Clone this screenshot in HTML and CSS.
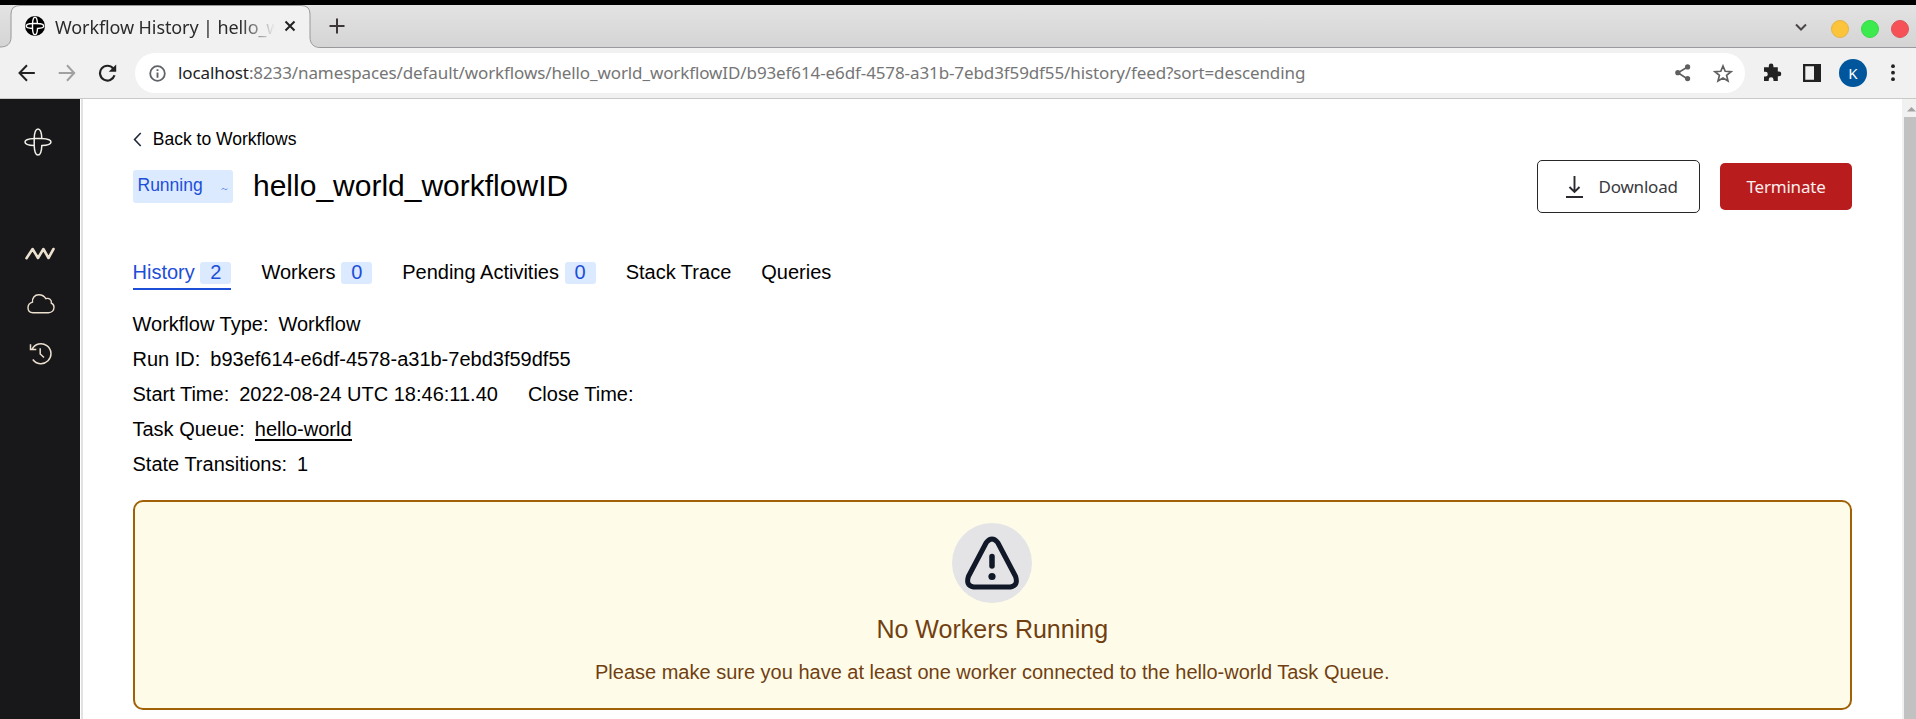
FILE: index.html
```html
<!DOCTYPE html>
<html lang="en">
<head>
<meta charset="utf-8">
<title>Workflow History | hello_world_workflowID</title>
<link rel="stylesheet" href="styles.css">
</head>
<body>
<div class="window">
  <div class="tabstrip">
    <svg class="tab-shape" width="334" height="43" viewBox="0 0 334 43">
      <path d="M0 43V42C7 42 11 39 11 32V9Q11 .5 20 .5H301Q310 .5 310 9V32C310 39 314 42 320 42V43Z" fill="#f1f1f1"/>
      <path d="M0 42C7 42 11 39 11 32V9Q11 .5 20 .5H301Q310 .5 310 9V32C310 39 314 42.5 320 42.5H334" fill="none" stroke="#989898"/>
    </svg>
    <div class="tab">
      <svg class="favicon" width="20" height="20" viewBox="0 0 20 20"><circle cx="10" cy="10" r="10" fill="#000"/><g fill="none" stroke="#fff" stroke-width="1.4"><path d="M7.500 7.500C7.700 4 8.600 1.200 10 1.200S12.300 4 12.500 7.500C16 7.700 18.800 8.600 18.800 10S16 12.300 12.500 12.500C12.300 16 11.400 18.800 10 18.800S7.700 16 7.500 12.500C4 12.300 1.200 11.400 1.200 10S4 7.700 7.500 7.500Z"/><path d="M7.500 12.500V7.500H12.500"/></g></svg>
      <span class="tab-title">Workflow History | hello_w</span>
      <svg class="tab-close" width="12" height="12" viewBox="0 0 12 12"><path d="M1.5 1.5L10.5 10.5M10.5 1.5L1.5 10.5" stroke="#222" stroke-width="2"/></svg>
    </div>
    <svg class="new-tab" width="16" height="16" viewBox="0 0 16 16"><path d="M8 .5V15.5M.5 8H15.5" stroke="#3c3639" stroke-width="2"/></svg>
    <div class="controls">
      <svg class="tab-search" width="12" height="9" viewBox="0 0 12 9"><path d="M1 1.5L6 6.5L11 1.5" fill="none" stroke="#4a4648" stroke-width="2"/></svg>
      <span class="dot yellow"></span><span class="dot green"></span><span class="dot red"></span>
    </div>
  </div>
  <div class="toolbar">
    <div class="nav">
      <svg width="18" height="18" viewBox="0 0 18 18"><path d="M16.800 9H2M9 1.3L1.5 9L9 16.7" fill="none" stroke="#222" stroke-width="2"/></svg>
      <svg width="18" height="18" viewBox="0 0 18 18"><path d="M.7 9H16M9 1.3L16.2 9L9 16.7" fill="none" stroke="#a0a0a0" stroke-width="2"/></svg>
      <svg width="20" height="18" viewBox="0 0 20 18"><path d="M15.2 4.5A7.4 7.4 0 1 0 16.5 11.3" fill="none" stroke="#222" stroke-width="2.2"/><path d="M18.2 .5V7.8H10.7Z" fill="#222"/></svg>
    </div>
    <div class="omnibox">
      <svg width="17" height="17" viewBox="0 0 17 17"><circle cx="8.5" cy="8.5" r="7.3" fill="none" stroke="#5f6368" stroke-width="1.8"/><path d="M8.5 4.2V6M8.5 7.5V12.7" stroke="#5f6368" stroke-width="1.9"/></svg>
      <span class="url"><b>localhost</b>:8233/namespaces/default/workflows/hello_world_workflowID/b93ef614-e6df-4578-a31b-7ebd3f59df55/history/feed?sort=descending</span>
      <svg class="share" width="16" height="18" viewBox="0 0 16 18"><path d="M12.5 3L3 8.7L12.5 15" fill="none" stroke="#5f5f5f" stroke-width="1.6"/><g fill="#5f5f5f"><circle cx="12.6" cy="2.9" r="2.6"/><circle cx="2.8" cy="8.7" r="2.6"/><circle cx="12.6" cy="14.6" r="2.6"/></g></svg>
      <svg class="star" width="20" height="19" viewBox="0 0 20 19"><path d="M10 2L12.2 7.3L18 7.7L13.6 11.4L15 17L10 14L5 17L6.4 11.4L2 7.7L7.8 7.3Z" fill="none" stroke="#5f5f5f" stroke-width="1.7"/></svg>
    </div>
    <div class="actions">
      <svg width="19" height="19" viewBox="0 0 19 19"><path d="M1 4.2H5.8V2.8A2.3 2.3 0 0 1 10.4 2.8V4.2H14.8V8.6H16A2.3 2.3 0 0 1 16 13.2H14.8V18H10.5V16.7A2.4 2.4 0 0 0 5.7 16.7V18H1V13.6H2.4A2.4 2.4 0 0 0 2.4 8.8H1Z" fill="#222"/></svg>
      <svg width="18" height="18" viewBox="0 0 18 18"><path d="M0 0H18V18H0ZM2.3 2.3V15.7H11V2.3Z" fill="#222" fill-rule="evenodd"/></svg>
      <span class="avatar">K</span>
      <svg width="4" height="18" viewBox="0 0 4 18"><circle cx="2" cy="2.2" r="1.9" fill="#222"/><circle cx="2" cy="8.7" r="1.9" fill="#222"/><circle cx="2" cy="15.2" r="1.9" fill="#222"/></svg>
    </div>
  </div>
  <div class="page">
    <nav class="sidebar">
      <svg class="logo" width="28" height="28" viewBox="0 0 28 28"><g fill="none" stroke="#f4f1ea" stroke-width="1.5"><path d="M10.200 10.400C10.400 5 12 1 14 1S17.600 5 17.800 10.400C23 10.600 27 11.900 27 14S23 17.400 17.800 17.600C17.600 23 16 27 14 27S10.400 23 10.200 17.600C5 17.400 1 16.100 1 14S5 10.600 10.200 10.400Z"/><path d="M10.200 17.600V10.400H17.800"/></g></svg>
      <svg class="wave" width="30" height="13" viewBox="0 0 30 13"><path d="M1.500 11.200L7.600 2L13 11L18.400 2L23.500 11L28.500 2" fill="none" stroke="#ece0ce" stroke-width="2.600" stroke-linecap="round" stroke-linejoin="round"/></svg>
      <svg class="cloud" width="28" height="20" viewBox="0 0 28 20"><path d="M6 18.700H21.500C25 18.700 27 16.200 27 13.300C27 11.200 25.700 9.700 24.300 9C25 6 22 3.500 18.800 4.700C17 1.500 14.500 .8 11.800 .8C7.500 .8 5 4.200 5.500 8.200C2.800 9 1 11 1 13.800C1 16.800 3 18.700 6 18.700Z" fill="none" stroke="#ece0ce" stroke-width="1.400"/></svg>
      <svg class="clock" width="23" height="23" viewBox="0 0 23 23"><path d="M3 7.300A10 10 0 1 1 3.800 17.500M1.500 2.200V7.500H7.300M11.200 6.200V12L15 15.500" fill="none" stroke="#ece0ce" stroke-width="1.500"/></svg>
    </nav>
    <main class="content">
      <a class="back"><svg width="9" height="15" viewBox="0 0 9 15"><path d="M7.700 1L1.600 7.500L7.700 14" fill="none" stroke="#1e293b" stroke-width="1.600"/></svg><span>Back to Workflows</span></a>
      <header class="head">
        <span class="status">Running<svg width="7" height="4" viewBox="0 0 7 4"><path d="M.5 2.500Q2 .5 3.500 2T6.500 1.800" fill="none" stroke="#6b93ef" stroke-width="1"/></svg></span>
        <h1>hello_world_workflowID</h1>
        <button class="download"><svg width="17" height="22" viewBox="0 0 17 22"><path d="M8.500 0V16M3.500 11L8.500 16L13.500 11M0 21H17" fill="none" stroke="#2a2a2e" stroke-width="1.900"/></svg><span>Download</span></button>
        <button class="terminate">Terminate</button>
      </header>
      <div class="tabs">
        <a class="active">History<i>2</i></a><a>Workers<i>0</i></a><a>Pending Activities<i>0</i></a><a>Stack Trace</a><a>Queries</a>
      </div>
      <section class="details">
        <p><span>Workflow Type:</span><span>Workflow</span></p>
        <p><span>Run ID:</span><span>b93ef614-e6df-4578-a31b-7ebd3f59df55</span></p>
        <p><span>Start Time:</span><span>2022-08-24 UTC 18:46:11.40</span><span class="close-time">Close Time:</span></p>
        <p><span>Task Queue:</span><span class="queue">hello-world</span></p>
        <p><span>State Transitions:</span><span>1</span></p>
      </section>
      <section class="alert">
        <svg width="80" height="80" viewBox="0 0 80 80"><circle cx="40" cy="40" r="40" fill="#e4e4e7"/><path d="M34.300 19.500Q40 12.500 45.700 19.500L63.600 53.500Q66.500 62.500 58.500 64H21.500Q13.500 62.500 16.400 53.500Z" fill="none" stroke="#111827" stroke-width="5" stroke-linejoin="round"/><path d="M40 33.500V43" stroke="#111827" stroke-width="5.500" stroke-linecap="round"/><circle cx="40" cy="53.500" r="3.600" fill="#111827"/></svg>
        <h2>No Workers Running</h2>
        <p>Please make sure you have at least one worker connected to the hello-world Task Queue.</p>
      </section>
    </main>
    <div class="scrollbar"><svg width="9" height="5" viewBox="0 0 9 5"><path d="M0 4.500L4.500 0L9 4.500Z" fill="#a3a3a3"/></svg><div class="thumb"></div></div>
  </div>
</div>
</body>
</html>
```
FILE: styles.css
```css
* { box-sizing: border-box; }
body { margin: 0; overflow: hidden; background: #fff; font-family: "Liberation Sans", Arial, sans-serif; color: #000; }
svg { display: block; flex: none; }
h1, h2, p { margin: 0; font-weight: 400; }
.window { width: 1916px; height: 719px; display: flex; flex-direction: column; overflow: hidden; }

.tabstrip { position: relative; flex: none; height: 48px; border-top: 5px solid #000; background: linear-gradient(#e3e3e3, #d4d4d5); box-shadow: inset 0 -1px #9b999d; display: flex; font-family: "Noto Sans", sans-serif; }
.tab-shape { position: absolute; left: 0; top: 0; }
.tab { position: relative; width: 310px; padding: 11px 0 0 25px; display: flex; }
.tab-title { width: 222px; margin: -1px 0 0 10px; font-size: 18px; letter-spacing: -.1px; line-height: 24px; white-space: nowrap; color: #2b2b2b; -webkit-mask-image: linear-gradient(90deg, #000 185px, transparent 220px); mask-image: linear-gradient(90deg, #000 185px, transparent 220px); }
.tab-close { margin: 4px 0 0 7px; }
.new-tab { position: relative; margin: 13px 0 0 19px; }
.controls { margin-left: auto; padding: 15px 7px 0 0; display: flex; gap: 12px; }
.tab-search { margin: 3px 12px 0 0; }
.dot { width: 18px; height: 18px; border-radius: 50%; }
.yellow { background: #fcc43a; border: 1px solid #e5b440; }
.green { background: #3bea4c; border: 1px solid #38d848; }
.red { background: #f65157; border: 1px solid #df5158; }

.toolbar { flex: none; height: 51px; background: #f1f1f1; border-bottom: 1px solid #c8cac8; display: flex; align-items: center; font-family: "Noto Sans", sans-serif; }
.nav { width: 135px; padding: 0 0 1px 18px; display: flex; gap: 22px; }
.omnibox { width: 1610px; height: 40px; border-radius: 20px; background: #fff; padding: 0 12px 0 14px; display: flex; align-items: center; }
.url { margin: -2px 0 0 12px; flex: 1; font-size: 17px; letter-spacing: -.105px; white-space: nowrap; color: #757575; }
.url b { font-weight: 400; color: #222; }
.share { margin-right: 22px; }
.actions { display: flex; align-items: center; padding-left: 18px; }
.actions svg { margin-bottom: 1px; }
.actions svg:nth-child(2) { margin-left: 21px; }
.avatar { width: 28px; height: 28px; margin: 0 24px 0 18px; border-radius: 50%; background: #00569d; color: #fff; font-size: 15px; line-height: 28px; text-align: center; }

.page { flex: 1; display: flex; min-height: 0; }
.sidebar { flex: none; width: 83px; background: linear-gradient(90deg, #18181b 80px, #fff 80px 81px, #e2e2e2 81px); padding-top: 29px; }
.logo { margin-left: 24px; }
.wave { margin: 91px 0 0 25px; }
.cloud { margin: 34px 0 0 26.5px; }
.clock { margin: 28px 0 0 28.5px; }
.content { flex: 1; padding: 28px 50px 0 49.5px; }
.back { display: flex; align-items: center; gap: 10.5px; height: 25px; font-size: 17.5px; padding-left: .8px; }
.head { display: flex; align-items: center; height: 53px; margin-top: 8px; }
.status { display: flex; justify-content: space-between; width: 100px; height: 33px; padding: 0 5px; border-radius: 3px; background: #dbeafe; color: #1d4ed8; font-size: 17.5px; line-height: 30px; }
.status svg { margin-top: 17px; }
h1 { margin-left: 20.5px; font-size: 30px; line-height: 51px; padding-bottom: 2px; }
button { font: 17px "Noto Sans", sans-serif; letter-spacing: -.2px; border-radius: 5px; padding: 0; white-space: nowrap; }
.download { width: 163px; height: 53px; margin-left: auto; border: 1px solid #27272a; background: #fff; color: #3a3a3e; display: flex; align-items: center; padding-left: 27.5px; gap: 16px; }
.terminate { width: 132px; height: 47px; margin-left: 20px; border: 0; background: #b91c1c; color: #fbeeee; }
.tabs { display: flex; gap: 30px; height: 30px; margin-top: 47px; font-size: 20px; line-height: 25px; }
.tabs a { display: flex; align-items: flex-start; }
.tabs i { width: 31px; height: 22px; margin: 2px 0 0 5.7px; border-radius: 3px; background: #dbeafe; color: #1d4ed8; font-style: normal; line-height: 21px; text-align: center; }
.tabs .active { color: #1d4ed8; border-bottom: 2px solid #1d4ed8; }
.details { margin-top: 17px; font-size: 20px; line-height: 35px; }
.details p { display: flex; gap: 10px; height: 35px; }
.details .close-time { margin-left: 20px; }
.queue { height: 23px; margin-top: 6px; line-height: 23px; border-bottom: 2px solid #000; }
.alert { height: 210px; margin-top: 18px; padding-top: 21px; border: 2px solid #a16207; border-radius: 10px; background: #fefce8; color: #713f12; display: flex; flex-direction: column; align-items: center; }
.alert h2 { margin-top: 9px; font-size: 25px; line-height: 35px; }
.alert p { margin-top: 10px; font-size: 20px; line-height: 30px; }
.scrollbar { flex: none; width: 14px; background: #f1f1f1; padding: 8px 0 0 2px; display: flex; flex-direction: column; }
.scrollbar svg { margin-left: 3px; }
.thumb { flex: 1; margin-top: 5px; background: #c1c1c1; }
```
